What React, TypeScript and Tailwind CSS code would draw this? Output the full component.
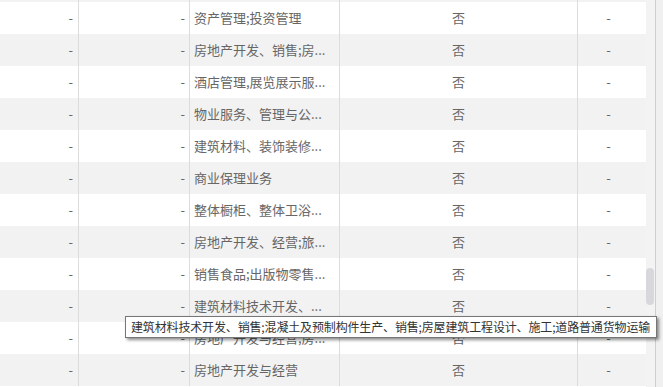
import React from "react";

const rows = [
  "资产管理;投资管理",
  "房地产开发、销售;房...",
  "酒店管理,展览展示服...",
  "物业服务、管理与公...",
  "建筑材料、装饰装修...",
  "商业保理业务",
  "整体橱柜、整体卫浴...",
  "房地产开发、经营;旅...",
  "销售食品;出版物零售...",
  "建筑材料技术开发、...",
  "房地产开发与经营;房...",
  "房地产开发与经营",
];

function Row({ text, gray, strip }: { text: string; gray: boolean; strip?: boolean }) {
  return (
    <div
      className={`flex ${strip ? "h-[2px]" : "h-[32px]"} ${gray ? "bg-[#f2f2f2]" : "bg-white"} text-[13px] text-[#666] shrink-0`}
    >
      <div className="w-[79px] border-r border-[#dcdcdc] flex items-center justify-end pr-[5px] overflow-hidden">
        {!strip && "-"}
      </div>
      <div className="w-[111px] border-r border-[#dcdcdc] flex items-center justify-end pr-[4px] overflow-hidden">
        {!strip && "-"}
      </div>
      <div className="w-[150px] border-r border-[#dcdcdc] flex items-center pl-[4px] overflow-hidden whitespace-nowrap">
        {!strip && text}
      </div>
      <div className="w-[238px] border-r border-[#dcdcdc] flex items-center justify-center overflow-hidden">
        {!strip && "否"}
      </div>
      <div className="w-[61px] flex items-center justify-center overflow-hidden">{!strip && "-"}</div>
      <div className="flex-1" />
    </div>
  );
}

export default function App() {
  return (
    <div
      className="relative w-[663px] h-[387px] overflow-hidden bg-white flex"
      style={{ fontFamily: '"Noto Sans CJK SC", "Noto Sans", sans-serif' }}
    >
      <div className="w-[646px] flex flex-col overflow-hidden">
        <Row text="" gray strip />
        {rows.map((t, i) => (
          <Row key={i} text={t} gray={i % 2 === 1} />
        ))}
      </div>
      <div className="w-[9px] bg-[#f3f3f3] relative">
        <div className="absolute left-0 top-[268px] w-[8px] h-[37px] rounded-[4px] bg-[#d8d8dc]" />
      </div>
      <div className="w-[1px] bg-[#cfcfcf]" />
      <div className="flex-1 bg-[#f0f0f0]" />

      <div className="absolute left-[125px] top-[316px] w-[532px] h-[22px] bg-white border border-[#767676] shadow-[2px_2px_3px_rgba(0,0,0,0.45)] flex items-center pl-[5px] text-[12px] tracking-[-0.15px] text-[#333] whitespace-nowrap overflow-hidden">
        建筑材料技术开发、销售;混凝土及预制构件生产、销售;房屋建筑工程设计、施工;道路普通货物运输
      </div>
    </div>
  );
}
